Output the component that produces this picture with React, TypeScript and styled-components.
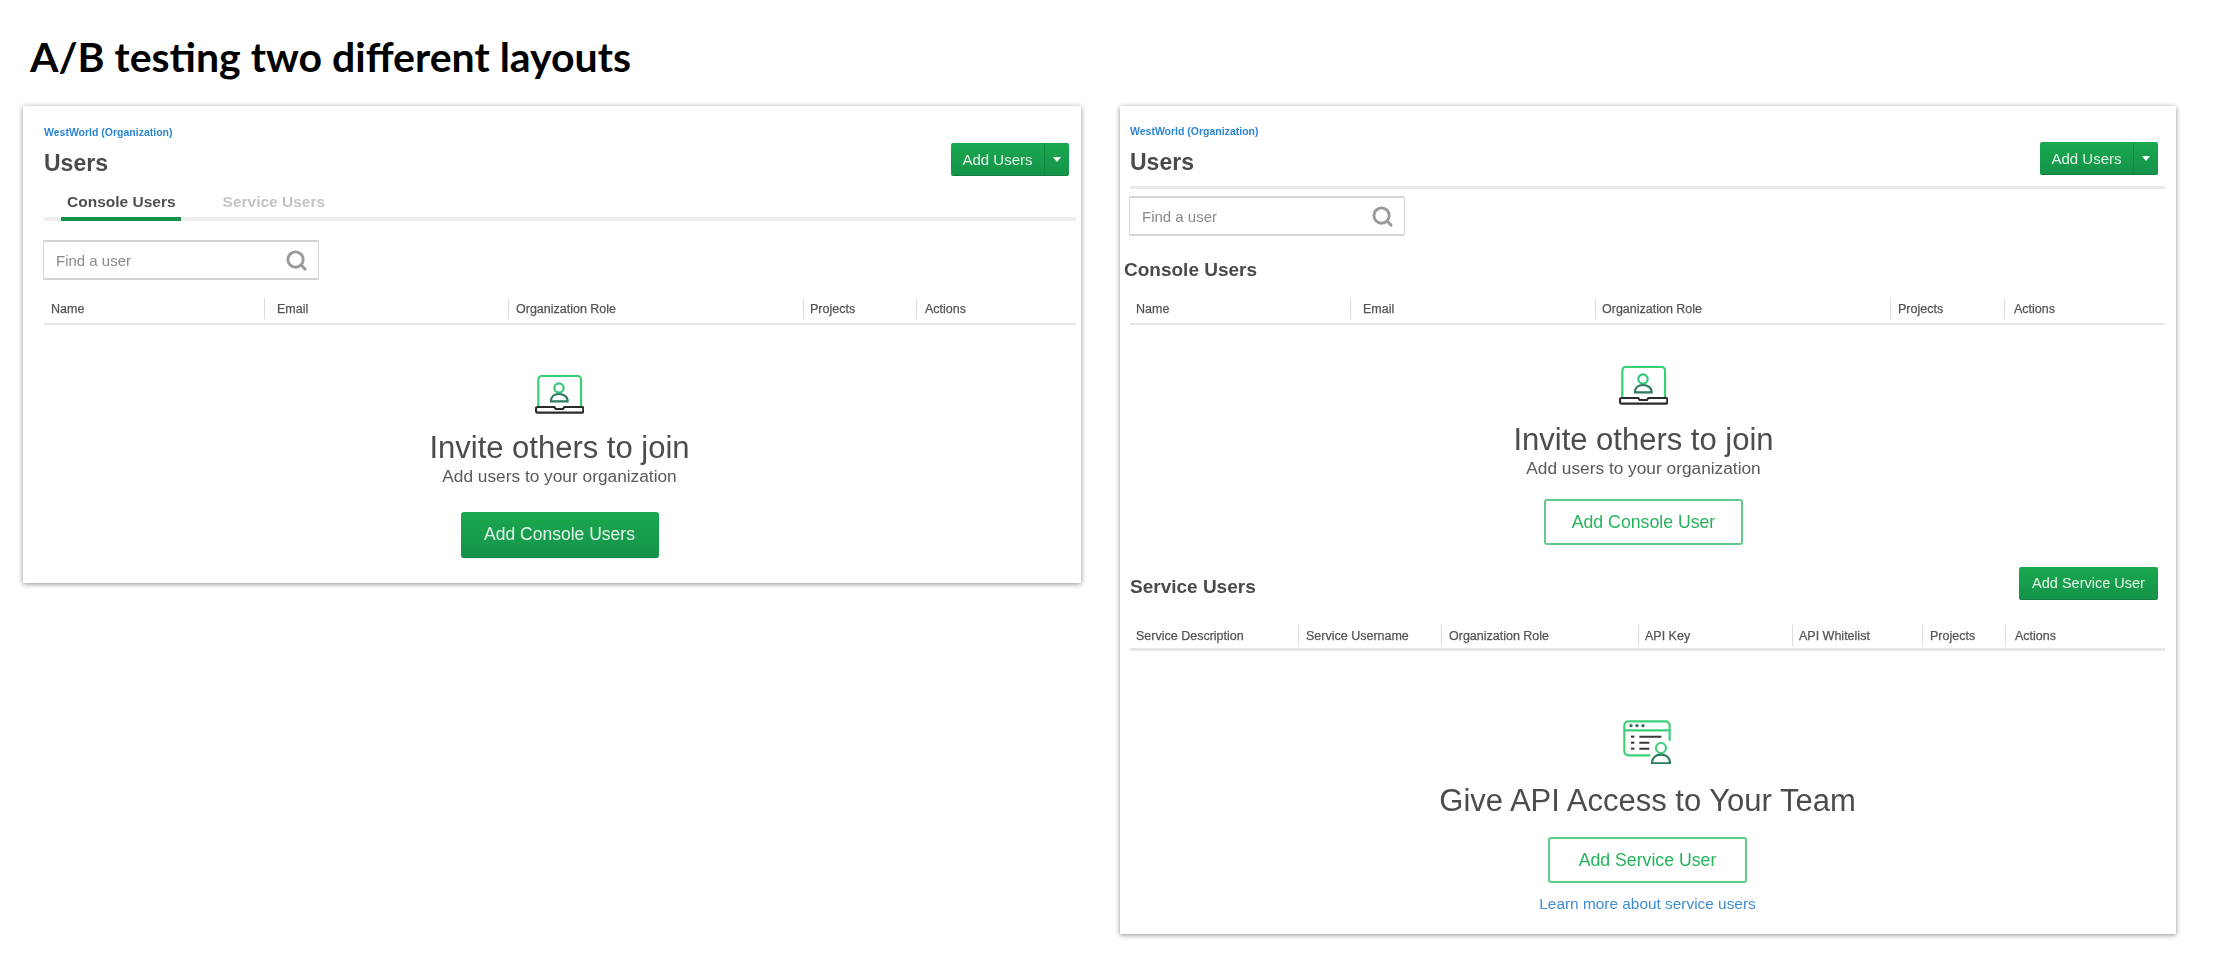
import React from "react";
import styled, { createGlobalStyle, css } from "styled-components";
import { Search } from "lucide-react";

const Global = createGlobalStyle`
  html, body { margin: 0; padding: 0; background: #fff; }
  body { font-family: "Liberation Sans", Arial, sans-serif; color: #444; }
`;

const Page = styled.div`
  width: 2217px;
  height: 969px;
  overflow: hidden;
  box-sizing: border-box;
  padding: 38px 0 0 23px;
`;
const PageTitle = styled.h1`
  margin: 0 0 0 7px;
  height: 38px;
  font: 700 41px/38px Lato, sans-serif;
  color: #000;
`;
const Cards = styled.div`
  display: flex;
  align-items: flex-start;
  gap: 39px;
  margin-top: 30px;
`;
const Card = styled.section<{ $w: number; $pt: number; $pl: number; $pr: number; $pb: number }>`
  box-sizing: border-box;
  width: ${(p) => p.$w}px;
  padding: ${(p) => `${p.$pt}px ${p.$pr}px ${p.$pb}px ${p.$pl}px`};
  background: #fff;
  box-shadow: 0 1px 5px rgba(0, 0, 0, 0.45);
  & > * {
    filter: blur(0.35px);
  }
`;
const Header = styled.header`
  display: flex;
  justify-content: space-between;
  align-items: flex-start;
`;
const Org = styled.a`
  display: block;
  font-size: 10.5px;
  line-height: 14px;
  font-weight: 700;
  color: #2d86d3;
`;
const H1 = styled.h2`
  margin: 9px 0 0;
  font-size: 23px;
  line-height: 30px;
  font-weight: 700;
  color: #4a4a4a;
`;
const Split = styled.div`
  display: flex;
  margin: 18px 7px 0 0;
  height: 33px;
  border-radius: 2px;
  overflow: hidden;
  background: linear-gradient(#1aa84f, #14934a);
  border-bottom: 1px solid #118040;
  box-sizing: border-box;
  color: #e4f5ea;
`;
const SplitMain = styled.span`
  width: 93px;
  text-align: center;
  font-size: 15px;
  line-height: 33px;
  border-right: 1px solid #128742;
`;
const SplitCaret = styled.span`
  width: 24px;
  display: flex;
  align-items: center;
  justify-content: center;
  &::before {
    content: "";
    border-left: 4px solid transparent;
    border-right: 4px solid transparent;
    border-top: 5px solid #fff;
  }
`;
const Tabs = styled.nav`
  display: flex;
  margin-top: 16px;
  border-bottom: 4px solid #eeeeee;
`;
const Tab = styled.span<{ $active?: boolean }>`
  padding: 0 5px 7px 6px;
  font-size: 15.5px;
  line-height: 16px;
  font-weight: 700;
  margin-bottom: -4px;
  ${(p) =>
    p.$active
      ? css`
          margin-left: 17px;
          margin-right: 36px;
          color: #4f4f4f;
          border-bottom: 4px solid #15924a;
        `
      : css`
          color: #c4c4c4;
        `}
`;
const SearchBox = styled.div<{ $mt: number }>`
  box-sizing: border-box;
  display: flex;
  align-items: center;
  justify-content: space-between;
  width: 276px;
  height: 40px;
  margin: ${(p) => p.$mt}px 0 0 -1px;
  padding: 1px 10px 0 12px;
  border: 1px solid #d4d4d4;
  border-top-width: 2px;
  border-bottom-width: 2px;
  border-radius: 2px;
  font-size: 15px;
  color: #8a8a8a;
`;
const Rule = styled.hr`
  margin: 9px 0 0;
  height: 3px;
  border: 0;
  background: #e9e9e9;
`;
const Section = styled.h3<{ $ml?: number; $mt?: number; $mb?: number }>`
  margin: ${(p) => p.$mt ?? 0}px 0 ${(p) => p.$mb ?? 0}px ${(p) => p.$ml ?? 0}px;
  font-size: 19px;
  line-height: 24px;
  font-weight: 700;
  color: #4a4a4a;
`;
const SectionRow = styled.div`
  display: flex;
  justify-content: space-between;
  align-items: flex-end;
  margin-top: 22px;
`;
const TableHead = styled.div<{ $cols: string; $mt: number; $line: number; $pb: number }>`
  display: grid;
  grid-template-columns: ${(p) => p.$cols};
  margin-top: ${(p) => p.$mt}px;
  padding-bottom: ${(p) => p.$pb}px;
  border-bottom: ${(p) => p.$line}px solid #e4e6e8;
`;
const Th = styled.div<{ $pad: number; $first?: boolean }>`
  height: 21px;
  box-sizing: border-box;
  padding-left: ${(p) => p.$pad}px;
  border-left: ${(p) => (p.$first ? "0" : "1px solid #dcdcdc")};
  font-size: 12.5px;
  line-height: 23px;
  font-weight: 400;
  color: #555;
  white-space: nowrap;
  -webkit-text-stroke: 0.25px #555;
`;
const Empty = styled.div<{ $shift: number; $mt: number }>`
  display: flex;
  flex-direction: column;
  align-items: center;
  margin-top: ${(p) => p.$mt}px;
  padding-right: ${(p) => p.$shift}px;
`;
const IconWrap = styled.svg<{ $w: number; $h: number }>`
  display: block;
  width: ${(p) => p.$w}px;
  height: ${(p) => p.$h}px;
`;
const EmptyTitle = styled.div<{ $mt: number }>`
  margin-top: ${(p) => p.$mt}px;
  font-size: 31px;
  line-height: 36px;
  color: #4c4c4c;
`;
const EmptySub = styled.div`
  font-size: 17.3px;
  line-height: 20px;
  color: #5a5a5a;
`;
const Solid = styled.button`
  box-sizing: border-box;
  width: 198px;
  height: 46px;
  margin-top: 26px;
  border: 0;
  border-bottom: 1px solid #118040;
  border-radius: 3px;
  background: linear-gradient(#1aa84f, #14934a);
  color: #e4f5ea;
  font: 400 17.5px "Liberation Sans", Arial, sans-serif;
`;
const SolidSmall = styled.button`
  box-sizing: border-box;
  width: 139px;
  height: 33px;
  margin-right: 7px;
  border: 0;
  border-bottom: 1px solid #118040;
  border-radius: 2px;
  background: linear-gradient(#1aa84f, #14934a);
  color: #e4f5ea;
  font: 400 14.5px "Liberation Sans", Arial, sans-serif;
`;
const Outline = styled.button<{ $mt: number; $w: number }>`
  box-sizing: border-box;
  width: ${(p) => p.$w}px;
  height: 46px;
  margin-top: ${(p) => p.$mt}px;
  border: 2px solid #62cb8b;
  border-radius: 3px;
  background: #fff;
  color: #25b45c;
  font: 400 17.7px "Liberation Sans", Arial, sans-serif;
`;
const Learn = styled.a`
  margin-top: 11px;
  font-size: 15.4px;
  line-height: 20px;
  color: #3f8cd2;
`;

const LaptopIcon = () => (
  <IconWrap $w={49} $h={39} viewBox="88 45 147 117" fill="none" strokeWidth="6.5">
    <path d="M98 138V58a10 10 0 0 1 10-10h108a10 10 0 0 1 10 10v80" stroke="#35d072" />
    <circle cx="160" cy="84" r="14" stroke="#35c677" />
    <path d="M136 124c0-14 10-22 24-22s26 8 26 22z" stroke="#2c7a60" />
    <path
      d="M96 141h50l4 6h22l4-6h53c3 0 4 2 4 4v8c0 3-2 5-4 5H96c-3 0-5-2-5-5v-8c0-2 2-4 5-4z"
      stroke="#2b2b2b"
    />
  </IconWrap>
);

const ApiIcon = () => (
  <IconWrap $w={49} $h={44} viewBox="68 43 147 132" fill="none" strokeWidth="6.5">
    <path
      d="M150 149H84a12 12 0 0 1-12-12V59a12 12 0 0 1 12-12h112a12 12 0 0 1 12 12v46"
      stroke="#3bd078"
    />
    <path d="M72 74h136" stroke="#3bd078" />
    <g fill="#2c6e5a">
      <circle cx="92" cy="60" r="5" />
      <circle cx="110" cy="60" r="5" />
      <circle cx="128" cy="60" r="5" />
    </g>
    <g fill="#333">
      <rect x="92" y="90" width="10" height="6" />
      <rect x="92" y="108" width="10" height="6" />
      <rect x="92" y="126" width="10" height="6" />
    </g>
    <path d="M117 93h66M117 111h30M117 129h30" stroke="#3a3a3a" strokeWidth="6" />
    <circle cx="182" cy="127" r="15" stroke="#3bd078" />
    <path d="M155 173c0-18 12-26 27-26s27 8 27 26z" stroke="#2c7a60" />
  </IconWrap>
);

type Col = [string, number];
const consoleColsL: Col[] = [["Name", 7], ["Email", 12], ["Organization Role", 7], ["Projects", 6], ["Actions", 8]];
const consoleColsR: Col[] = [["Name", 6], ["Email", 12], ["Organization Role", 6], ["Projects", 7], ["Actions", 9]];
const serviceCols: Col[] = [
  ["Service Description", 6], ["Service Username", 7], ["Organization Role", 7], ["API Key", 6],
  ["API Whitelist", 6], ["Projects", 7], ["Actions", 9],
];

const Head = ({ cols, template, mt, line, pb }: { cols: Col[]; template: string; mt: number; line: number; pb: number }) => (
  <TableHead $cols={template} $mt={mt} $line={line} $pb={pb}>
    {cols.map(([label, pad], i) => (
      <Th key={label} $pad={pad} $first={i === 0}>{label}</Th>
    ))}
  </TableHead>
);

const Find = ({ mt }: { mt: number }) => (
  <SearchBox $mt={mt}>
    <span>Find a user</span>
    <Search size={23} strokeWidth={3} color="#9a9a9a" />
  </SearchBox>
);

export default function App() {
  return (
    <Page>
      <Global />
      <PageTitle>A/B testing two different layouts</PageTitle>
      <Cards>
        <Card $w={1058} $pt={19} $pl={21} $pr={5} $pb={25}>
          <Header>
            <div>
              <Org>WestWorld (Organization)</Org>
              <H1>Users</H1>
            </div>
            <Split>
              <SplitMain>Add Users</SplitMain>
              <SplitCaret />
            </Split>
          </Header>
          <Tabs>
            <Tab $active>Console Users</Tab>
            <Tab>Service Users</Tab>
          </Tabs>
          <Find mt={19} />
          <Head cols={consoleColsL} template="220px 244px 295px 113px 160px" mt={18} line={2} pb={4} />
          <Empty $shift={1} $mt={50}>
            <LaptopIcon />
            <EmptyTitle $mt={16}>Invite others to join</EmptyTitle>
            <EmptySub>Add users to your organization</EmptySub>
            <Solid>Add Console Users</Solid>
          </Empty>
        </Card>
        <Card $w={1056} $pt={18} $pl={10} $pr={11} $pb={20}>
          <Header>
            <div>
              <Org>WestWorld (Organization)</Org>
              <H1>Users</H1>
            </div>
            <Split>
              <SplitMain>Add Users</SplitMain>
              <SplitCaret />
            </Split>
          </Header>
          <Rule />
          <Find mt={7} />
          <Section $ml={-6} $mt={22}>Console Users</Section>
          <Head cols={consoleColsR} template="220px 245px 295px 114px 161px" mt={16} line={2} pb={4} />
          <Empty $shift={8} $mt={41}>
            <LaptopIcon />
            <EmptyTitle $mt={17}>Invite others to join</EmptyTitle>
            <EmptySub>Add users to your organization</EmptySub>
            <Outline $mt={21} $w={199}>Add Console User</Outline>
          </Empty>
          <SectionRow>
            <Section $mb={1}>Service Users</Section>
            <SolidSmall>Add Service User</SolidSmall>
          </SectionRow>
          <Head cols={serviceCols} template="168px 143px 197px 154px 130px 83px 160px" mt={25} line={3} pb={2} />
          <Empty $shift={0} $mt={69}>
            <ApiIcon />
            <EmptyTitle $mt={19}>Give API Access to Your Team</EmptyTitle>
            <Outline $mt={18} $w={199}>Add Service User</Outline>
            <Learn>Learn more about service users</Learn>
          </Empty>
        </Card>
      </Cards>
    </Page>
  );
}
